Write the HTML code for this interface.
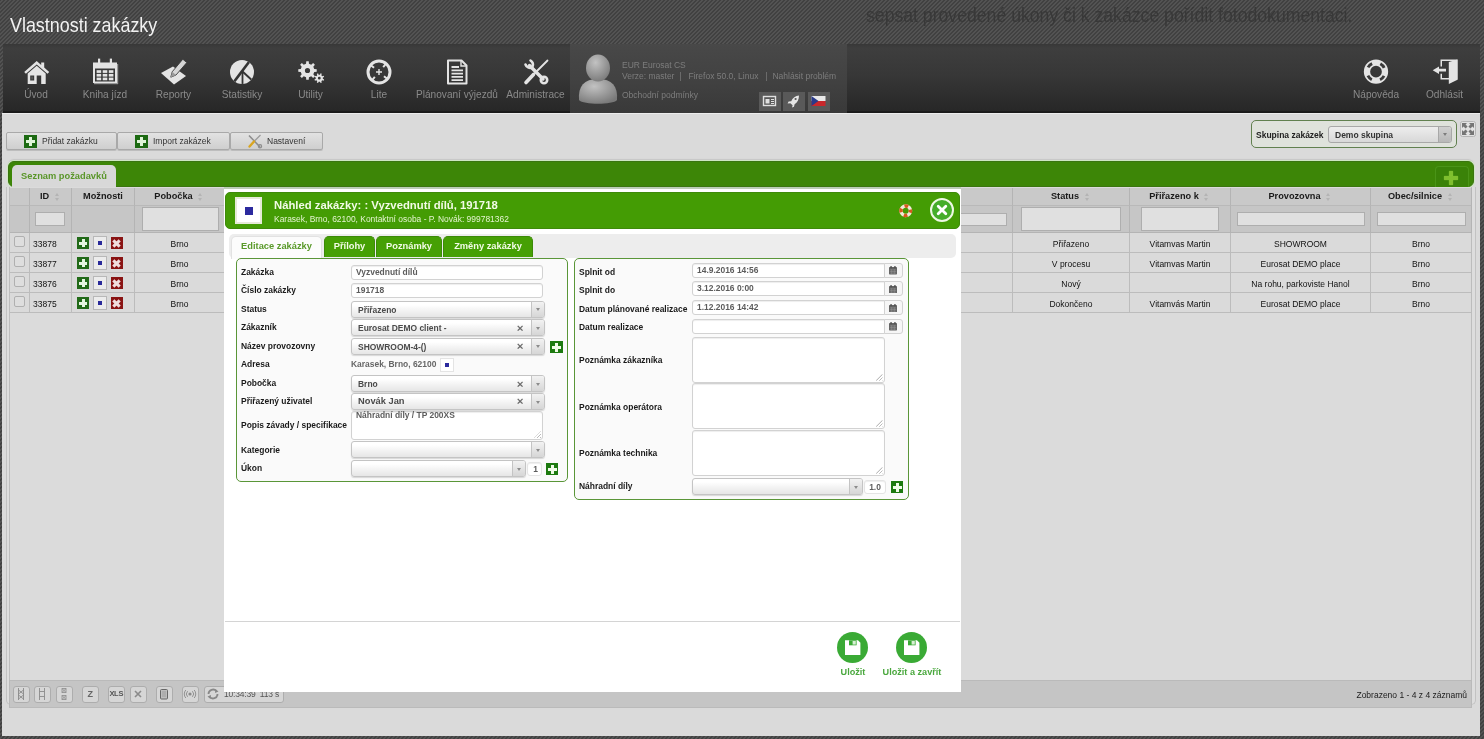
<!DOCTYPE html>
<html lang="cs">
<head>
<meta charset="utf-8">
<title>Vlastnosti zakázky</title>
<style>
*{box-sizing:border-box;margin:0;padding:0}
html,body{width:1484px;height:739px;overflow:hidden}
body{font-family:"Liberation Sans",sans-serif;font-size:8.5px;color:#222;position:relative;
 background-color:#4e4e4e;
 background-image:repeating-linear-gradient(135deg,#414141 0,#414141 0.75px,#535353 0.75px,#535353 2.8284px);}
.abs{position:absolute}
#root{position:absolute;left:0;top:0;width:1484px;height:739px;will-change:transform}
#title{left:9.7px;top:12.75px;font-size:19.8px;color:#f2f2f2;font-weight:normal;line-height:24px;transform:scaleX(0.905);transform-origin:0 0;white-space:nowrap}
#ghost{left:866px;top:3px;font-size:20px;color:#383838;line-height:24px;white-space:nowrap;transform:scaleX(0.882);transform-origin:0 0}
#nav{left:2.5px;top:44px;width:1477.5px;height:68.5px;background:linear-gradient(#383838 0,#3e3e3e 6%,#373737 45%,#272727 97%,#1a1a1a 98%)}
#userbox{left:570px;top:44px;width:277px;height:68.5px;background:linear-gradient(#484848,#424242 50%,#393939)}

.ni{position:absolute;top:57px;width:100px;margin-left:-50px;text-align:center;color:#8a8a8a;font-size:10.1px;line-height:13px}
.ni svg{display:block;margin:0 auto;width:30px;height:30px}
.ni span{display:block;margin-top:1px;white-space:nowrap}
.ut{position:absolute;color:#7d7d7d;font-size:8.5px;line-height:10px;white-space:nowrap}
.ub{position:absolute;top:92px;width:22px;height:19px;background:#595959;padding:2px 0 0 2px}

.btn{position:absolute;top:132px;height:18px;border-radius:2px;border:1px solid #a9a9a9;background:linear-gradient(#e2e2e2,#cfcfcf);font-size:8.5px;line-height:16px;color:#333;white-space:nowrap;box-shadow:0 1px 0 #bdbdbd}
.btn i{position:absolute;top:2px;width:13px;height:13px}
.btn span{position:absolute;top:0}
.plus{background:#1c6a12;display:block}
.plus:before,.plus:after{content:"";position:absolute;background:#dff5d8}
.plus:before{left:5px;top:2px;width:3px;height:9px}
.plus:after{left:2px;top:5px;width:9px;height:3px}
#grp{left:1251px;top:120px;width:206px;height:28px;border:1px solid #61804f;border-radius:5px;background:#dfe2dc}
#grp b{position:absolute;left:4px;top:8.5px;font-size:8.5px;line-height:11px;color:#222}
.sel{position:absolute;border:1px solid #a8a8a8;border-radius:3px;background:linear-gradient(#ededed,#d8d8d8);font-size:8.5px;font-weight:bold;color:#444;white-space:nowrap;overflow:hidden}
.sel .arr{position:absolute;right:0;top:0;bottom:0;width:13px;border-left:1px solid #a8a8a8;background:linear-gradient(#d0d0d0,#b8b8b8);border-radius:0 2px 2px 0}
.sel .arr:after{content:"";position:absolute;left:3.5px;top:50%;margin-top:-1.5px;border:2.5px solid transparent;border-top:3.5px solid #7c7c7c;border-bottom:0}
.sel .x{position:absolute;right:19px;top:0;font-size:11px;font-weight:bold;color:#777}
#gbar{left:8px;top:161px;width:1466px;height:26px;background:#3d8607;border:1px solid #3a7510;border-radius:6px;box-shadow:0 0 0 1px #cfe6c2,0 -2px 1px #c6c6c6}
#gtab{left:12px;top:165px;width:104px;height:23px;background:#d8d8d8;border-radius:5px 5px 0 0;font-size:9.3px;font-weight:bold;color:#5a962a;text-align:center;line-height:22px}
#gplus{left:1435px;top:166px;width:34px;height:21px;background:#3a8208;border-radius:4px 4px 0 0;border:1px solid #4a9418;border-bottom:0}
#gplus:before,#gplus:after{content:"";position:absolute;background:#7fbf2e;box-shadow:0 0 1px #9ad04a}
#gplus:before{left:13px;top:4px;width:4px;height:14px;border-radius:1px}
#gplus:after{left:8px;top:9px;width:14px;height:4px;border-radius:1px}
#tbl{left:9px;top:187px;width:1463px;height:494px;background:#dbdbdb;border-left:1px solid #bdbdbd;border-right:1px solid #bdbdbd}
.th{position:absolute;top:188px;height:18px;background:#c9c9c9;border-right:1px solid #b4b4b4;border-bottom:1px solid #b9b9b9;font-size:9.2px;font-weight:bold;color:#1a1a1a;text-align:center;line-height:17.5px;white-space:nowrap}
.th em{display:inline-block;position:relative;width:7px;height:9px;margin-left:5px;vertical-align:-2.5px}
.th em:before{content:"";position:absolute;left:0.5px;top:0.5px;border:2.5px solid transparent;border-bottom:3px solid #b4b4b4;border-top:0}
.th em:after{content:"";position:absolute;left:0.5px;top:5px;border:2.5px solid transparent;border-top:3px solid #b4b4b4;border-bottom:0}
.tf{position:absolute;top:206px;height:27px;background:#c6c6c6;border-right:1px solid #b4b4b4;border-bottom:1px solid #b4b4b4}
.tf u{position:absolute;display:block;background:#e0e0e0;border:1px solid #aeaeae;text-decoration:none}
.td{position:absolute;height:20px;border-right:1px solid #bcbcbc;border-bottom:1px solid #bcbcbc;background:#dadada;font-size:8.5px;color:#111;text-align:center;line-height:22.6px;white-space:nowrap}
.cb{position:absolute;left:4px;top:3px;width:11px;height:11px;border:1px solid #b0b0b0;border-radius:2px;background:#dedede}
.ic{position:absolute;top:4px;width:12px;height:12px}
.icp{background:#216a18}
.icp:before,.icp:after{content:"";position:absolute;background:#e4f6df}
.icp:before{left:4.5px;top:2px;width:3px;height:8px}
.icp:after{left:2px;top:4.5px;width:8px;height:3px}
.icv{background:#ececec;border:1px solid #b8b8b8;width:14px;height:14px;top:3px}
.icv:after{content:"";position:absolute;left:4px;top:4px;width:4px;height:4px;background:#2a2a9a}
.icx{background:#8a1414}
.icx:before,.icx:after{content:"";position:absolute;left:4.5px;top:1.5px;width:3px;height:9px;background:#f0dede;transform:rotate(45deg)}
.icx:after{transform:rotate(-45deg)}
#pager{left:9px;top:680px;width:1463px;height:28px;background:#c5c5c5;border:1px solid #bababa}
.pb{position:absolute;top:686px;width:16.5px;height:16.5px;border:1px solid #adadad;border-radius:3px;background:#d6d6d6;font-size:6px;font-weight:bold;color:#666;text-align:center;line-height:14px;overflow:hidden}

#dlg{left:224px;top:187px;width:737px;height:505px;background:#fff;border-top:2.5px solid #bccdb6}
#dh{left:225px;top:192px;width:735px;height:36.5px;background:#449c04;border:1px solid #3e8a0a;border-radius:5px}
#dicon{left:235px;top:197px;width:27px;height:27px;background:#fff;border:2px solid #e6ead8}
#dicon:after{content:"";position:absolute;left:7.5px;top:8px;width:8px;height:8px;background:#2c2a9e}
#dt{left:274px;top:199px;font-size:11.3px;font-weight:bold;color:#f2fbe6;line-height:13px;white-space:nowrap}
#ds{left:274px;top:213.7px;font-size:8.45px;color:#e4f4d0;line-height:11px;white-space:nowrap}
#dclose{left:929.5px;top:197.5px;width:24px;height:24px;border:2px solid #eef8e4;border-radius:50%;background:#45ad2a}
#tabs{left:229px;top:233.5px;width:727px;height:24px;background:#ededed;border-radius:5px}
.tab{position:absolute;top:236.3px;height:21px;background:#46a004;border:1px solid #3c8a08;border-bottom:0;border-radius:5px 5px 0 0;color:#f2fbe6;font-size:9.3px;font-weight:bold;text-align:center;line-height:19px;white-space:nowrap}
.tab.act{background:#fcfcfc;border-color:#e2e2e2;color:#5a9a2a;height:22.5px}
.fs{position:absolute;border:1px solid #5a9638;border-radius:5px;background:#fafafa}
.lb{position:absolute;font-size:8.45px;font-weight:bold;color:#1a1a1a;line-height:11px;white-space:nowrap}
.in{position:absolute;border:1px solid #d2d2d2;border-radius:3px;background:#fff;font-size:8.45px;font-weight:bold;color:#5c5c5c;line-height:12.5px;padding-left:4px;white-space:nowrap;box-shadow:inset 0 1px 1px #eee}
.dsel{position:absolute;height:17px;border:1px solid #c4c4c4;border-radius:3px;background:linear-gradient(#fff 20%,#f2f2f2 60%,#e6e6e6);font-size:8.45px;font-weight:bold;color:#4a4a4a;line-height:16.5px;padding-left:6px;white-space:nowrap;box-shadow:0 1px 1px #d8d8d8}
.dsel .arr{position:absolute;right:0;top:0;bottom:0;width:13px;border-left:1px solid #c4c4c4;background:linear-gradient(#f2f2f2,#d6d6d6);border-radius:0 2px 2px 0}
.dsel .arr:after{content:"";position:absolute;left:3.5px;top:6.5px;border:2.5px solid transparent;border-top:3.5px solid #8c8c8c;border-bottom:0}
.dsel .x{position:absolute;right:20.5px;top:-0.5px;font-size:11.5px;font-weight:bold;color:#6a6a6a}
.calb{position:absolute;width:18.5px;height:15px;border:1px solid #d2d2d2;border-radius:0 3px 3px 0;background:#f6f6f6}
.gp{position:absolute;width:13px;height:13px;background:#1d7a10}
.gp:before,.gp:after{content:"";position:absolute;background:#f0fbe8}
.gp:before{left:5px;top:2px;width:3px;height:9px}
.gp:after{left:2px;top:5px;width:9px;height:3px}
.ta:after{content:"";position:absolute;right:1px;bottom:1px;width:7px;height:7px;background:repeating-linear-gradient(135deg,transparent 0,transparent 1.5px,#bbb 1.5px,#bbb 2.5px);clip-path:polygon(100% 0,100% 100%,0 100%)}
.sv{position:absolute;top:632px;width:31px;height:31px;border-radius:50%;background:#3aaa35}
.svl{position:absolute;top:666px;font-size:9.15px;font-weight:bold;color:#4aa83e;line-height:12px;white-space:nowrap;text-align:center}
#content{left:2px;top:112.5px;width:1478px;height:623.5px;background:#dadada;border-top:1px solid #ececec}
</style>
</head>
<body>
<div id="root">
<div id="title" class="abs">Vlastnosti zakázky</div>
<div id="ghost" class="abs">sepsat provedené úkony či k zakázce pořídit fotodokumentaci.</div>
<div id="nav" class="abs"></div>
<div id="userbox" class="abs"></div>
<div class="ni" style="left:36px"><svg viewBox="0 0 30 30"><g fill="#e4e4e4" transform="translate(0.7 0)"><path d="M15 4 L2.5 15 L4.2 16.8 L15 7.4 L25.8 16.8 L27.5 15 L22.5 10.6 V5.5 H19.5 V8 Z"/><path d="M6 16.4 L15 8.8 L24 16.4 V27 H19.5 V18.5 H15 V27 H6 Z M8.5 18.5 V23.5 H12.5 V18.5 Z"/><rect x="9.5" y="19.5" width="2" height="3" fill="#555"/></g></svg><span>Úvod</span></div>
<div class="ni" style="left:105px"><svg viewBox="0 0 30 30"><g fill="#e4e4e4" transform="translate(0 -1)"><path d="M3 6.5 H27 V27 H3 Z M5 12.6 V25.4 H25 V12.6 Z" fill-rule="evenodd"/><rect x="4" y="27" width="24" height="1.2" fill="#999"/><rect x="27" y="8" width="1.2" height="20" fill="#999"/><rect x="8" y="2.6" width="2.2" height="7"/><rect x="19.8" y="2.6" width="2.2" height="7"/><rect x="6.6" y="14.2" width="4.6" height="2.7"/><rect x="12.7" y="14.2" width="4.6" height="2.7"/><rect x="18.8" y="14.2" width="4.6" height="2.7"/><rect x="6.6" y="17.9" width="4.6" height="2.7"/><rect x="12.7" y="17.9" width="4.6" height="2.7"/><rect x="18.8" y="17.9" width="4.6" height="2.7"/><rect x="6.6" y="21.6" width="4.6" height="2.7"/><rect x="12.7" y="21.6" width="4.6" height="2.7"/><rect x="18.8" y="21.6" width="4.6" height="2.7"/></g></svg><span>Kniha jízd</span></div>
<div class="ni" style="left:173.5px"><svg viewBox="0 0 30 30"><g fill="#e4e4e4"><path d="M2 16 L14 9.5 L27 19 L15 27.5 Z"/><path d="M23.8 2.2 L27.8 5.6 L17 18 L11.8 20.2 L13.2 14.8 Z" fill="#d6d6d6" stroke="#3a3a3a" stroke-width="0.9"/><path d="M13.2 14.8 L17 18 L11.8 20.2 Z" fill="#9a9a9a"/></g></svg><span>Reporty</span></div>
<div class="ni" style="left:242px"><svg viewBox="0 0 30 30"><defs><clipPath id="pc"><circle cx="15" cy="15" r="12"/></clipPath></defs><g clip-path="url(#pc)"><rect x="0" y="0" width="30" height="30" fill="#e4e4e4"/><g stroke="#343434" fill="none"><path d="M23.5 3 L6.5 25.5" stroke-width="2.6"/><path d="M15.5 15 V30" stroke-width="1.8"/><path d="M15.5 14.5 L27 25" stroke-width="2"/></g></g></svg><span>Statistiky</span></div>
<div class="ni" style="left:310.5px"><svg viewBox="0 0 30 30"><g fill="#e4e4e4" fill-rule="evenodd"><path d="M18.25 12.05 L20.72 12.26 L20.72 14.74 L18.25 14.95 L17.30 17.24 L18.89 19.14 L17.14 20.89 L15.24 19.30 L12.95 20.25 L12.74 22.72 L10.26 22.72 L10.05 20.25 L7.76 19.30 L5.86 20.89 L4.11 19.14 L5.70 17.24 L4.75 14.95 L2.28 14.74 L2.28 12.26 L4.75 12.05 L5.70 9.76 L4.11 7.86 L5.86 6.11 L7.76 7.70 L10.05 6.75 L10.26 4.28 L12.74 4.28 L12.95 6.75 L15.24 7.70 L17.14 6.11 L18.89 7.86 L17.30 9.76 Z M14.10 13.50 A2.6 2.6 0 1 0 8.90 13.50 A2.6 2.6 0 1 0 14.10 13.50 Z"/><path d="M26.84 21.84 L28.14 22.47 L27.63 23.70 L26.27 23.24 L25.35 24.16 L25.82 25.52 L24.59 26.03 L23.96 24.74 L22.66 24.74 L22.03 26.04 L20.80 25.53 L21.26 24.17 L20.34 23.25 L18.98 23.72 L18.47 22.49 L19.76 21.86 L19.76 20.56 L18.46 19.93 L18.97 18.70 L20.33 19.16 L21.25 18.24 L20.78 16.88 L22.01 16.37 L22.64 17.66 L23.94 17.66 L24.57 16.36 L25.80 16.87 L25.34 18.23 L26.26 19.15 L27.62 18.68 L28.13 19.91 L26.84 20.54 Z M24.70 21.20 A1.4 1.4 0 1 0 21.90 21.20 A1.4 1.4 0 1 0 24.70 21.20 Z"/></g></svg><span>Utility</span></div>
<div class="ni" style="left:379px"><svg viewBox="0 0 30 30"><g fill="none" stroke="#e4e4e4"><circle cx="15" cy="15" r="11" stroke-width="3"/><path d="M15 4 V8.5 M15 21.5 V26 M4 15 H8.5 M21.5 15 H26" stroke-width="2" transform="rotate(40 15 15)"/><path d="M15 12 V18 M12 15 H18" stroke-width="1.4"/></g></svg><span>Lite</span></div>
<div class="ni" style="left:457px"><svg viewBox="0 0 30 30"><g fill="none" stroke="#e4e4e4"><path d="M6 3.5 H19.5 L24.5 8.5 V26.5 H6 Z" stroke-width="2" stroke-linejoin="round"/><path d="M19 3.5 V9 H24.5" stroke-width="1.4"/><path d="M9.5 10 H17 M9.5 13.3 H21 M9.5 16.6 H21 M9.5 19.9 H21 M9.5 23.2 H21" stroke-width="1.8"/></g></svg><span>Plánovaní výjezdů</span></div>
<div class="ni" style="left:535.5px"><svg viewBox="0 0 30 30"><g fill="none" stroke="#e4e4e4" stroke-linecap="round"><path d="M8.5 8.5 L22 22" stroke-width="3.4"/><path d="M4.5 7.5 A5 5 0 0 0 11 10.5 M9.5 3.5 A5 5 0 0 1 11.5 9.5" stroke-width="2.6"/><circle cx="23" cy="23" r="3.2" stroke-width="2.6"/><path d="M26.5 3.5 L14 16" stroke-width="1.8"/><path d="M12.5 17.5 L5 25.5" stroke-width="3.6"/></g></svg><span>Administrace</span></div>
<div class="ni" style="left:1376px"><svg viewBox="0 0 30 30"><g fill="none"><circle cx="15" cy="14.7" r="9" stroke="#e4e4e4" stroke-width="6.3"/><circle cx="15" cy="14.7" r="9" stroke="#3a3a3a" stroke-width="2.9" stroke-dasharray="5.6 8.537" stroke-dashoffset="-4.27"/></g></svg><span>Nápověda</span></div>
<div class="ni" style="left:1444.5px"><svg viewBox="0 0 30 30"><g fill="#e4e4e4"><path d="M10.5 2.5 H27.5 V22.4 H26 V4 H12 V9.5 H10.5 Z M10.5 16.8 H12 V20.9 H19 V22.4 H10.5 Z"/><path d="M18.8 5.1 L27.5 2.5 V22.8 L18.8 26.9 Z"/><path d="M2.7 13.2 L9 9.4 V11.85 H16 V14.55 H9 V17 Z"/></g></svg><span>Odhlásit</span></div>
<svg class="abs" style="left:577px;top:53px" width="42" height="54" viewBox="0 0 42 54"><defs><radialGradient id="ug" cx="40%" cy="30%" r="75%"><stop offset="0" stop-color="#c2c2c2"/><stop offset="1" stop-color="#787878"/></radialGradient></defs><path d="M2 47 C1 33 7 26 21 26 C35 26 41 33 40 47 C36 52 6 52 2 47 Z" fill="url(#ug)"/><ellipse cx="21" cy="15" rx="12" ry="13.5" fill="url(#ug)"/></svg>
<div class="ut" style="left:622px;top:60px">EUR Eurosat CS</div>
<div class="ut" style="left:622px;top:71px">Verze: master &nbsp;|&nbsp;&nbsp; Firefox 50.0, Linux &nbsp;&nbsp;|&nbsp; Nahlásit problém</div>
<div class="ut" style="left:622px;top:90px">Obchodní podmínky</div>
<div class="ub" style="left:759px"><svg viewBox="0 0 17 14" width="17" height="14"><rect x="2.5" y="2.5" width="12" height="9" fill="none" stroke="#e0e0e0" stroke-width="1.4"/><rect x="4.5" y="5" width="4" height="4.5" fill="#e0e0e0"/><path d="M10 5.5 H13 M10 7.5 H13 M10 9.5 H13" stroke="#e0e0e0" stroke-width="1"/></svg></div>
<div class="ub" style="left:783px"><svg viewBox="0 0 17 14" width="17" height="14"><path d="M14 1.5 C10.5 1.8 7.5 4 6.2 7.2 L3.6 7.6 L2.6 9.6 L5.4 9.2 L7.6 11.2 L7 13.6 L9 12.8 L9.6 10.2 C12.4 8.6 14 5.4 14 1.5 Z" fill="#e6e6e6"/><circle cx="10.6" cy="5" r="1.1" fill="#595959"/></svg></div>
<div class="ub" style="left:808px"><svg viewBox="0 0 17 14" width="17" height="14"><rect x="1.5" y="2" width="14" height="5" fill="#e8e8e8"/><rect x="1.5" y="7" width="14" height="5" fill="#c8282c"/><path d="M1.5 2 L8.5 7 L1.5 12 Z" fill="#2a3a8a"/></svg></div>
<div id="content" class="abs"></div>
<div class="btn" style="left:6px;width:111px"><i class="plus" style="left:17px"></i><span style="left:35px">Přidat zakázku</span></div>
<div class="btn" style="left:117px;width:113px"><i class="plus" style="left:17px"></i><span style="left:35px">Import zakázek</span></div>
<div class="btn" style="left:230px;width:93px"><svg class="abs" style="left:16px;top:0" width="16" height="16" viewBox="0 0 16 16"><path d="M2 2.5 L13 14" stroke="#8c8c8c" stroke-width="1.6"/><path d="M13.5 2 L7 8.5" stroke="#9a9a9a" stroke-width="1.2"/><path d="M7 8.5 L2.5 13.5" stroke="#d9a520" stroke-width="2.4" stroke-linecap="round"/><circle cx="13" cy="13.3" r="1.6" fill="none" stroke="#8c8c8c" stroke-width="1.2"/></svg><span style="left:36px">Nastavení</span></div>
<div id="grp" class="abs"><b>Skupina zakázek</b><div class="sel" style="left:76px;top:5px;width:124px;height:17px;line-height:16.5px;padding-left:6px;color:#333">Demo skupina<div class="arr"></div></div></div>
<svg class="abs" style="left:1460px;top:121px" width="16" height="16" viewBox="0 0 16 16"><rect x="0.5" y="0.5" width="15" height="15" rx="2" fill="#e2e2e2" stroke="#b5b5b5"/><g fill="#757575"><path d="M2 2 H7 L5.5 3.5 L7.6 5.6 L5.6 7.6 L3.5 5.5 L2 7 Z"/><path d="M14 2 V7 L12.5 5.5 L10.4 7.6 L8.4 5.6 L10.5 3.5 L9 2 Z"/><path d="M2 14 V9 L3.5 10.5 L5.6 8.4 L7.6 10.4 L5.5 12.5 L7 14 Z"/><path d="M14 14 H9 L10.5 12.5 L8.4 10.4 L10.4 8.4 L12.5 10.5 L14 9 Z"/></g></svg>
<div id="gbar" class="abs"></div>
<div id="gplus" class="abs"></div>
<div id="gtab" class="abs">Seznam požadavků</div>
<div class="abs" style="left:6px;top:187px;width:1470px;height:518px;border:1px solid #c2c2c2;border-top:0;border-radius:0 0 5px 5px;background:#dddddd"></div><div id="tbl" class="abs"></div>
<div class="th" style="left:10px;width:20px"></div><div class="tf" style="left:10px;width:20px"></div>
<div class="th" style="left:30px;width:42px">ID<em></em></div><div class="tf" style="left:30px;width:42px"><u style="left:5px;top:6px;width:30px;height:14px"></u></div>
<div class="th" style="left:72px;width:63px">Možnosti</div><div class="tf" style="left:72px;width:63px"></div>
<div class="th" style="left:135px;width:90px">Pobočka<em></em></div><div class="tf" style="left:135px;width:90px"><u style="left:7px;top:1px;width:77px;height:24px"></u></div>
<div class="th" style="left:225px;width:788px"></div><div class="tf" style="left:225px;width:788px"><u style="left:725px;top:7px;width:57px;height:13px"></u></div>
<div class="th" style="left:1013px;width:117px">Status<em></em></div><div class="tf" style="left:1013px;width:117px"><u style="left:8px;top:1px;width:100px;height:24px"></u></div>
<div class="th" style="left:1130px;width:101px">Přiřazeno k<em></em></div><div class="tf" style="left:1130px;width:101px"><u style="left:11px;top:1px;width:78px;height:24px"></u></div>
<div class="th" style="left:1231px;width:140px">Provozovna<em></em></div><div class="tf" style="left:1231px;width:140px"><u style="left:6px;top:6px;width:128px;height:14px"></u></div>
<div class="th" style="left:1371px;width:101px">Obec/silnice<em></em></div><div class="tf" style="left:1371px;width:101px"><u style="left:6px;top:6px;width:89px;height:14px"></u></div>
<div class="td" style="left:10px;top:233px;width:20px;"><i class="cb"></i></div><div class="td" style="left:30px;top:233px;width:42px;text-align:left;padding-left:3px">33878</div><div class="td" style="left:72px;top:233px;width:63px;"><i class="ic icp" style="left:5px"></i><i class="ic icv" style="left:20.5px"></i><i class="ic icx" style="left:38.5px"></i></div><div class="td" style="left:135px;top:233px;width:90px;">Brno</div><div class="td" style="left:225px;top:233px;width:788px;"></div><div class="td" style="left:1013px;top:233px;width:117px;">Přiřazeno</div><div class="td" style="left:1130px;top:233px;width:101px;">Vitamvas Martin</div><div class="td" style="left:1231px;top:233px;width:140px;">SHOWROOM</div><div class="td" style="left:1371px;top:233px;width:101px;">Brno</div>
<div class="td" style="left:10px;top:253px;width:20px;"><i class="cb"></i></div><div class="td" style="left:30px;top:253px;width:42px;text-align:left;padding-left:3px">33877</div><div class="td" style="left:72px;top:253px;width:63px;"><i class="ic icp" style="left:5px"></i><i class="ic icv" style="left:20.5px"></i><i class="ic icx" style="left:38.5px"></i></div><div class="td" style="left:135px;top:253px;width:90px;">Brno</div><div class="td" style="left:225px;top:253px;width:788px;"></div><div class="td" style="left:1013px;top:253px;width:117px;">V procesu</div><div class="td" style="left:1130px;top:253px;width:101px;">Vitamvas Martin</div><div class="td" style="left:1231px;top:253px;width:140px;">Eurosat DEMO place</div><div class="td" style="left:1371px;top:253px;width:101px;">Brno</div>
<div class="td" style="left:10px;top:273px;width:20px;"><i class="cb"></i></div><div class="td" style="left:30px;top:273px;width:42px;text-align:left;padding-left:3px">33876</div><div class="td" style="left:72px;top:273px;width:63px;"><i class="ic icp" style="left:5px"></i><i class="ic icv" style="left:20.5px"></i><i class="ic icx" style="left:38.5px"></i></div><div class="td" style="left:135px;top:273px;width:90px;">Brno</div><div class="td" style="left:225px;top:273px;width:788px;"></div><div class="td" style="left:1013px;top:273px;width:117px;">Nový</div><div class="td" style="left:1130px;top:273px;width:101px;"></div><div class="td" style="left:1231px;top:273px;width:140px;">Na rohu, parkoviste Hanol</div><div class="td" style="left:1371px;top:273px;width:101px;">Brno</div>
<div class="td" style="left:10px;top:293px;width:20px;"><i class="cb"></i></div><div class="td" style="left:30px;top:293px;width:42px;text-align:left;padding-left:3px">33875</div><div class="td" style="left:72px;top:293px;width:63px;"><i class="ic icp" style="left:5px"></i><i class="ic icv" style="left:20.5px"></i><i class="ic icx" style="left:38.5px"></i></div><div class="td" style="left:135px;top:293px;width:90px;">Brno</div><div class="td" style="left:225px;top:293px;width:788px;"></div><div class="td" style="left:1013px;top:293px;width:117px;">Dokončeno</div><div class="td" style="left:1130px;top:293px;width:101px;">Vitamvás Martin</div><div class="td" style="left:1231px;top:293px;width:140px;">Eurosat DEMO place</div><div class="td" style="left:1371px;top:293px;width:101px;">Brno</div>
<div id="pager" class="abs"></div>
<div class="pb" style="left:13px"><svg viewBox="0 0 14 14" width="14" height="14"><path d="M4.5 1 V13 M9.5 1 V13 M4.5 3 L9.5 7 M9.5 3 L4.5 7 M4.5 8 L9.5 12 M9.5 8 L4.5 12" stroke="#8a8a8a" stroke-width="0.9" fill="none"/></svg></div><div class="pb" style="left:34px"><svg viewBox="0 0 14 14" width="14" height="14"><path d="M4.5 1 V13 M9.5 1 V13 M4.5 4.5 H9.5 M4.5 9.5 H9.5" stroke="#8a8a8a" stroke-width="0.9" fill="none"/></svg></div><div class="pb" style="left:56px"><svg viewBox="0 0 14 14" width="14" height="14"><path d="M5 1.5 H9 V5.5 H5 Z M5 8.5 H9 V12.5 H5 Z M5 1.5 L9 5.5 M9 1.5 L5 5.5 M5 8.5 L9 12.5 M9 8.5 L5 12.5" stroke="#8a8a8a" stroke-width="0.8" fill="none"/></svg></div><div class="pb" style="left:82px"><span style="font-size:9px;font-weight:bold;color:#666">Z</span></div><div class="pb" style="left:108px"><span style="font-size:7.5px;font-weight:bold;color:#555;letter-spacing:-0.3px">XLS</span></div><div class="pb" style="left:130px"><svg viewBox="0 0 14 14" width="14" height="14"><path d="M4 4 L10 10 M10 4 L4 10" stroke="#8a8a8a" stroke-width="1.6"/></svg></div><div class="pb" style="left:156px"><svg viewBox="0 0 14 14" width="14" height="14"><rect x="3.5" y="2.5" width="7" height="9.5" rx="1" fill="#bdbdbd" stroke="#666" stroke-width="1"/><path d="M5 5 H9 M5 7 H9 M5 9 H9" stroke="#8a8a8a" stroke-width="0.6"/></svg></div><div class="pb" style="left:182px"><svg viewBox="0 0 14 14" width="14" height="14"><circle cx="7" cy="7" r="1.6" fill="#8a8a8a"/><path d="M4.6 4.2 A4 4 0 0 0 4.6 9.8 M9.4 4.2 A4 4 0 0 1 9.4 9.8 M2.8 3 A6 6 0 0 0 2.8 11 M11.2 3 A6 6 0 0 1 11.2 11" stroke="#8a8a8a" stroke-width="0.9" fill="none"/></svg></div><div class="pb" style="left:204px;width:80px;text-align:left;font-size:8.5px;font-weight:normal;color:#555;padding-left:19px;white-space:nowrap;letter-spacing:-0.2px"><svg class="abs" style="left:1px;top:0" viewBox="0 0 14 14" width="14" height="14"><path d="M11.5 7 A4.5 4.5 0 0 1 3.5 9.8 M2.5 7 A4.5 4.5 0 0 1 10.5 4.2" stroke="#888" stroke-width="1.8" fill="none"/><path d="M9.5 2 L12.5 4.5 L9 6 Z M4.5 12 L1.5 9.5 L5 8 Z" fill="#888"/></svg>10:34:39&nbsp; 113 s</div>
<div class="abs" style="right:17px;top:689.7px;font-size:8.5px;color:#1a1a1a;line-height:11px;white-space:nowrap">Zobrazeno 1 - 4 z 4 záznamů</div>


<div id="dlg" class="abs"></div>
<div id="dh" class="abs"></div>
<div id="dicon" class="abs"></div>
<div id="dt" class="abs">Náhled zakázky: : Vyzvednutí dílů, 191718</div>
<div id="ds" class="abs">Karasek, Brno, 62100, Kontaktní osoba - P. Novák: 999781362</div>
<svg class="abs" style="left:897.5px;top:203px" width="15.5" height="15.5" viewBox="0 0 15 15"><circle cx="7.5" cy="7.5" r="4.6" fill="none" stroke="#f2ead8" stroke-width="3.4"/><circle cx="7.5" cy="7.5" r="4.6" fill="none" stroke="#d65a1e" stroke-width="3.4" stroke-dasharray="3.6 3.62" stroke-dashoffset="1.8"/></svg>
<div id="dclose" class="abs"><svg width="20" height="20" viewBox="-1 -1 20 20"><path d="M5.2 5.2 L12.8 12.8 M12.8 5.2 L5.2 12.8" stroke="#fff" stroke-width="2.8" stroke-linecap="round"/></svg></div>
<div id="tabs" class="abs"></div>
<div class="tab act" style="left:231px;width:91px">Editace zakázky</div>
<div class="tab" style="left:324px;width:51px">Přílohy</div>
<div class="tab" style="left:376px;width:66px">Poznámky</div>
<div class="tab" style="left:443px;width:90px">Změny zakázky</div>
<div class="fs" style="left:236px;top:258px;width:332px;height:223.5px"></div>
<div class="fs" style="left:574px;top:258px;width:335px;height:242px"></div>
<div class="lb" style="left:241px;top:267px">Zakázka</div><div class="lb" style="left:241px;top:285px">Číslo zakázky</div><div class="lb" style="left:241px;top:304px">Status</div><div class="lb" style="left:241px;top:322px">Zákazník</div><div class="lb" style="left:241px;top:341px">Název provozovny</div><div class="lb" style="left:241px;top:359px">Adresa</div><div class="lb" style="left:241px;top:378px">Pobočka</div><div class="lb" style="left:241px;top:396px">Přiřazený uživatel</div><div class="lb" style="left:241px;top:420px">Popis závady / specifikace</div><div class="lb" style="left:241px;top:444.8px">Kategorie</div><div class="lb" style="left:241px;top:463px">Úkon</div>
<div class="in" style="left:351px;top:264.5px;width:192px;height:15px">Vyzvednutí dílů</div>
<div class="in" style="left:351px;top:282.7px;width:192px;height:15px">191718</div>
<div class="dsel" style="left:351px;top:300.6px;width:194px">Přiřazeno<div class="arr"></div></div>
<div class="dsel" style="left:351px;top:319.2px;width:194px">Eurosat DEMO client -<span class="x">×</span><div class="arr"></div></div>
<div class="dsel" style="left:351px;top:337.5px;width:194px">SHOWROOM-4-()<span class="x">×</span><div class="arr"></div></div>
<i class="gp" style="left:550px;top:340.5px;width:12.5px;height:12.5px"></i>
<div class="lb" style="left:351px;top:359px;color:#666">Karasek, Brno, 62100</div>
<div class="abs" style="left:440px;top:358px;width:14px;height:14px;background:#fff;border:1px solid #e4e4e4"><i class="abs" style="left:4px;top:4px;width:4px;height:4px;background:#2c2a9e"></i></div>
<div class="dsel" style="left:351px;top:375px;width:194px">Brno<span class="x">×</span><div class="arr"></div></div>
<div class="dsel" style="left:351px;top:393px;width:194px;font-size:9.3px;line-height:14px">Novák Jan<span class="x">×</span><div class="arr"></div></div>
<div class="in ta" style="left:351px;top:411px;width:192px;height:29px;line-height:7px">Náhradní díly / TP 200XS</div>
<div class="dsel" style="left:351px;top:441px;width:194px"><div class="arr"></div></div>
<div class="dsel" style="left:351px;top:460px;width:175px"><div class="arr"></div></div>
<div class="in" style="left:527px;top:462px;width:15px;height:14px;text-align:right;padding:0 3px 0 0;border-color:#e4e4e4">1</div>
<i class="gp" style="left:546px;top:463px;width:12px;height:12px"></i>
<div class="lb" style="left:579px;top:267px">Splnit od</div><div class="lb" style="left:579px;top:285px">Splnit do</div><div class="lb" style="left:579px;top:304px">Datum plánované realizace</div><div class="lb" style="left:579px;top:322px">Datum realizace</div><div class="lb" style="left:579px;top:354.8px">Poznámka zákazníka</div><div class="lb" style="left:579px;top:401.8px">Poznámka operátora</div><div class="lb" style="left:579px;top:448px">Poznámka technika</div><div class="lb" style="left:579px;top:481px">Náhradní díly</div><div class="in" style="left:692px;top:262.8px;width:193px;height:15px;border-radius:3px 0 0 3px">14.9.2016 14:56</div><i class="calb" style="left:884px;top:262.8px"><svg class="abs" style="left:3.7px;top:2.5px" width="8" height="8.5" viewBox="0 0 8 8.5"><rect x="0" y="1" width="8" height="7.5" rx="0.7" fill="#636363"/><rect x="1.4" y="0" width="1.3" height="2.2" fill="#4e4e4e"/><rect x="5.3" y="0" width="1.3" height="2.2" fill="#4e4e4e"/><path d="M0.8 3.9 H7.2 M0.8 5.5 H7.2 M0.8 7.1 H7.2" stroke="#9a9a9a" stroke-width="0.5"/><path d="M2.7 3.2 V8 M5.3 3.2 V8" stroke="#9a9a9a" stroke-width="0.5"/></svg></i><div class="in" style="left:692px;top:281.4px;width:193px;height:15px;border-radius:3px 0 0 3px">3.12.2016 0:00</div><i class="calb" style="left:884px;top:281.4px"><svg class="abs" style="left:3.7px;top:2.5px" width="8" height="8.5" viewBox="0 0 8 8.5"><rect x="0" y="1" width="8" height="7.5" rx="0.7" fill="#636363"/><rect x="1.4" y="0" width="1.3" height="2.2" fill="#4e4e4e"/><rect x="5.3" y="0" width="1.3" height="2.2" fill="#4e4e4e"/><path d="M0.8 3.9 H7.2 M0.8 5.5 H7.2 M0.8 7.1 H7.2" stroke="#9a9a9a" stroke-width="0.5"/><path d="M2.7 3.2 V8 M5.3 3.2 V8" stroke="#9a9a9a" stroke-width="0.5"/></svg></i><div class="in" style="left:692px;top:300.0px;width:193px;height:15px;border-radius:3px 0 0 3px">1.12.2016 14:42</div><i class="calb" style="left:884px;top:300.0px"><svg class="abs" style="left:3.7px;top:2.5px" width="8" height="8.5" viewBox="0 0 8 8.5"><rect x="0" y="1" width="8" height="7.5" rx="0.7" fill="#636363"/><rect x="1.4" y="0" width="1.3" height="2.2" fill="#4e4e4e"/><rect x="5.3" y="0" width="1.3" height="2.2" fill="#4e4e4e"/><path d="M0.8 3.9 H7.2 M0.8 5.5 H7.2 M0.8 7.1 H7.2" stroke="#9a9a9a" stroke-width="0.5"/><path d="M2.7 3.2 V8 M5.3 3.2 V8" stroke="#9a9a9a" stroke-width="0.5"/></svg></i><div class="in" style="left:692px;top:318.6px;width:193px;height:15px;border-radius:3px 0 0 3px"></div><i class="calb" style="left:884px;top:318.6px"><svg class="abs" style="left:3.7px;top:2.5px" width="8" height="8.5" viewBox="0 0 8 8.5"><rect x="0" y="1" width="8" height="7.5" rx="0.7" fill="#636363"/><rect x="1.4" y="0" width="1.3" height="2.2" fill="#4e4e4e"/><rect x="5.3" y="0" width="1.3" height="2.2" fill="#4e4e4e"/><path d="M0.8 3.9 H7.2 M0.8 5.5 H7.2 M0.8 7.1 H7.2" stroke="#9a9a9a" stroke-width="0.5"/><path d="M2.7 3.2 V8 M5.3 3.2 V8" stroke="#9a9a9a" stroke-width="0.5"/></svg></i><div class="in ta" style="left:692px;top:336.7px;width:192.5px;height:46px"></div><div class="in ta" style="left:692px;top:382.7px;width:192.5px;height:46px"></div><div class="in ta" style="left:692px;top:429.7px;width:192.5px;height:46px"></div>
<div class="dsel" style="left:692px;top:478px;width:171px"><div class="arr"></div></div>
<div class="in" style="left:864px;top:480px;width:22px;height:14px;text-align:center;padding:0;border-color:#e4e4e4">1.0</div>
<i class="gp" style="left:891px;top:481px;width:12px;height:12px"></i>
<div class="abs" style="left:225px;top:621px;width:735px;height:1px;background:#d4d4d4"></div>
<div class="sv" style="left:837px"><svg width="31" height="31" viewBox="0 0 31 31"><path d="M8 8.3 H21 L23.4 10.7 V23 H8 Z" fill="#fff"/><rect x="12" y="8.3" width="7.6" height="5" fill="#3aaa35"/><rect x="15.6" y="9" width="3.2" height="3.6" fill="#d8f0d4"/></svg></div><div class="sv" style="left:896px"><svg width="31" height="31" viewBox="0 0 31 31"><path d="M8 8.3 H21 L23.4 10.7 V23 H8 Z" fill="#fff"/><rect x="12" y="8.3" width="7.6" height="5" fill="#3aaa35"/><rect x="15.6" y="9" width="3.2" height="3.6" fill="#d8f0d4"/></svg></div><div class="svl" style="left:823px;width:60px">Uložit</div><div class="svl" style="left:872px;width:80px">Uložit a zavřít</div>
</div>
</body>
</html>
